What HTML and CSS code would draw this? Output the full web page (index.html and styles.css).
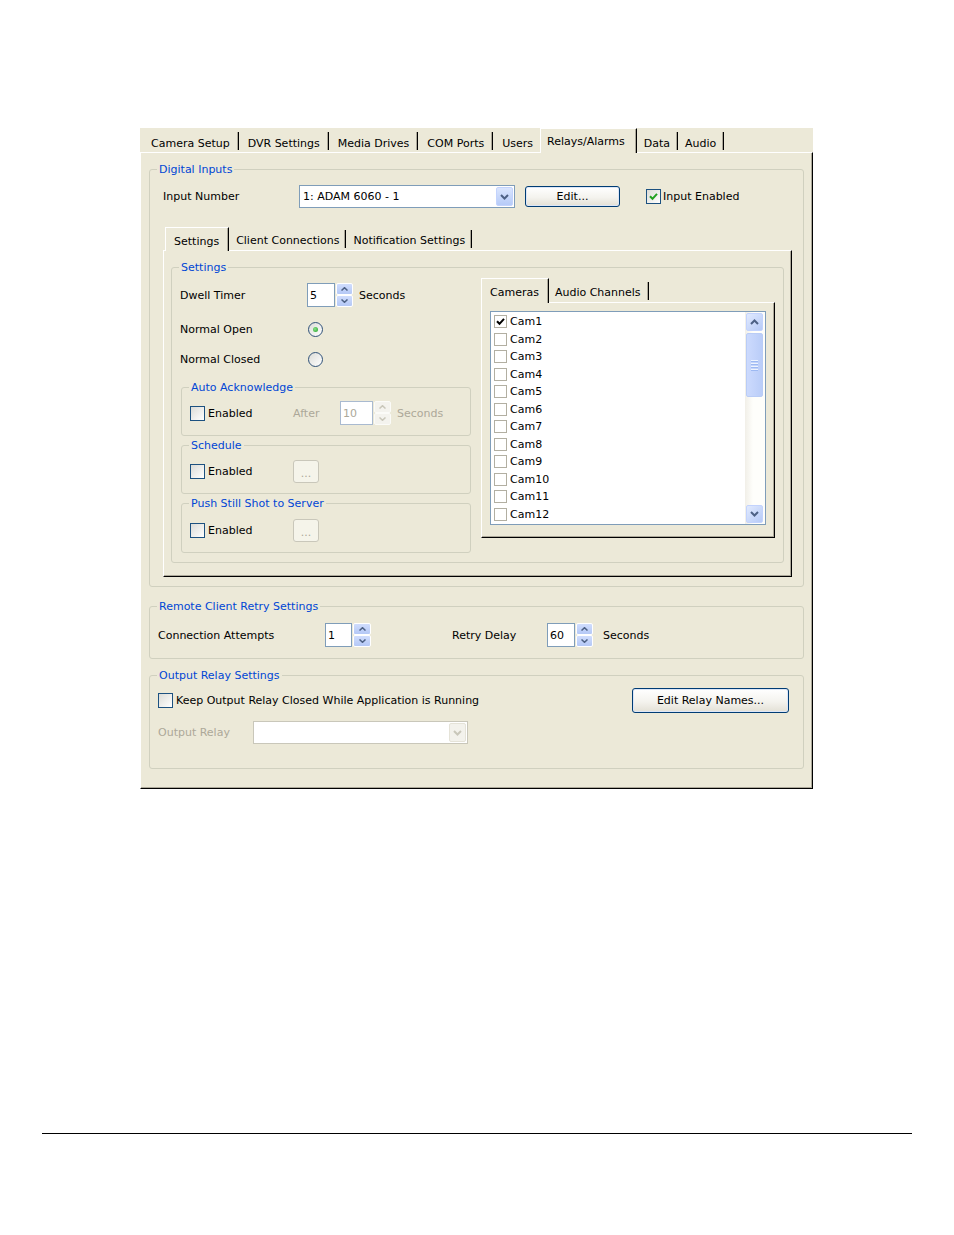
FILE: index.html
```html
<!DOCTYPE html>
<html>
<head>
<meta charset="utf-8">
<title>Relays/Alarms</title>
<link rel="stylesheet" href="styles.css">
</head>
<body>
<div class="page">
  <div class="window">
    <div class="tabs top">
      <div class="tab">Camera Setup</div>
      <div class="tab">DVR Settings</div>
      <div class="tab">Media Drives</div>
      <div class="tab">COM Ports</div>
      <div class="tab">Users</div>
      <div class="tab active">Relays/Alarms</div>
      <div class="tab after">Data</div>
      <div class="tab after">Audio</div>
    </div>
    <div class="panel">
      <fieldset class="group g-digital">
        <legend>Digital Inputs</legend>
        <div class="gbody">
          <div class="row r-input">
            <span class="w-input">Input Number</span>
            <div class="combo c-input">
              <span class="combo-text">1: ADAM 6060 - 1</span>
              <span class="combo-btn"><svg width="9" height="6" viewBox="0 0 9 6"><path d="M1 1 L4.5 4.5 L8 1" fill="none" stroke="#4D6185" stroke-width="2"/></svg></span>
            </div>
            <div class="btn b-edit">Edit...</div>
            <div class="check c-enabled"><span class="cbox"><svg width="9" height="9" viewBox="0 0 9 9"><path d="M1 4.2 L3.5 6.8 L8 1.8" fill="none" stroke="#21A121" stroke-width="2"/></svg></span>Input Enabled</div>
          </div>

          <div class="tabs subtabs">
            <div class="tab active">Settings</div>
            <div class="tab">Client Connections</div>
            <div class="tab">Notification Settings</div>
          </div>
          <div class="subpanel">
            <fieldset class="group g-settings">
              <legend>Settings</legend>
              <div class="gbody cols">
                <div class="leftcol">
                  <div class="row r-dwell">
                    <span class="w-dwell">Dwell Timer</span>
                    <div class="spin">
                      <div class="spin-in w28">5</div>
                      <div class="spin-bt">
                        <span><svg width="7" height="4" viewBox="0 0 7 4"><path d="M0.5 3.5 L3.5 0.7 L6.5 3.5" fill="none" stroke="#4D6185" stroke-width="1.5"/></svg></span>
                        <span><svg width="7" height="4" viewBox="0 0 7 4"><path d="M0.5 0.5 L3.5 3.3 L6.5 0.5" fill="none" stroke="#4D6185" stroke-width="1.5"/></svg></span>
                      </div>
                    </div>
                    <span class="secs-s">Seconds</span>
                  </div>
                  <div class="row r-radio r-open">
                    <span class="w-dwell">Normal Open</span>
                    <span class="radio on"><span class="dot"></span></span>
                  </div>
                  <div class="row r-radio r-closed">
                    <span class="w-dwell">Normal Closed</span>
                    <span class="radio"></span>
                  </div>

                  <fieldset class="group g-sub g-ack">
                    <legend>Auto Acknowledge</legend>
                    <div class="gbody">
                      <div class="row r-ack">
                        <div class="check w-en"><span class="cbox"></span>Enabled</div>
                        <span class="w-after dis">After</span>
                        <div class="spin dis">
                          <div class="spin-in w33">10</div>
                          <div class="spin-bt">
                            <span><svg width="7" height="4" viewBox="0 0 7 4"><path d="M0.5 3.5 L3.5 0.7 L6.5 3.5" fill="none" stroke="#C9C7BA" stroke-width="1.5"/></svg></span>
                            <span><svg width="7" height="4" viewBox="0 0 7 4"><path d="M0.5 0.5 L3.5 3.3 L6.5 0.5" fill="none" stroke="#C9C7BA" stroke-width="1.5"/></svg></span>
                          </div>
                        </div>
                        <span class="secs-s dis">Seconds</span>
                      </div>
                    </div>
                  </fieldset>

                  <fieldset class="group g-sub g-sched">
                    <legend>Schedule</legend>
                    <div class="gbody">
                      <div class="row r-btn">
                        <div class="check w-en2"><span class="cbox"></span>Enabled</div>
                        <div class="dbtn">...</div>
                      </div>
                    </div>
                  </fieldset>

                  <fieldset class="group g-sub g-push">
                    <legend>Push Still Shot to Server</legend>
                    <div class="gbody">
                      <div class="row r-btn r-push">
                        <div class="check w-en2"><span class="cbox"></span>Enabled</div>
                        <div class="dbtn">...</div>
                      </div>
                    </div>
                  </fieldset>
                </div>

                <div class="rightcol">
                  <div class="tabs camtabs">
                    <div class="tab active">Cameras</div>
                    <div class="tab">Audio Channels</div>
                  </div>
                  <div class="campanel">
                    <div class="listbox">
                      <div class="items">
                        <div class="item"><span class="lcb"><svg width="9" height="9" viewBox="0 0 9 9"><path d="M1 4.2 L3.5 6.8 L8 1.8" fill="none" stroke="#000" stroke-width="2"/></svg></span>Cam1</div>
                        <div class="item"><span class="lcb"></span>Cam2</div>
                        <div class="item"><span class="lcb"></span>Cam3</div>
                        <div class="item"><span class="lcb"></span>Cam4</div>
                        <div class="item"><span class="lcb"></span>Cam5</div>
                        <div class="item"><span class="lcb"></span>Cam6</div>
                        <div class="item"><span class="lcb"></span>Cam7</div>
                        <div class="item"><span class="lcb"></span>Cam8</div>
                        <div class="item"><span class="lcb"></span>Cam9</div>
                        <div class="item"><span class="lcb"></span>Cam10</div>
                        <div class="item"><span class="lcb"></span>Cam11</div>
                        <div class="item"><span class="lcb"></span>Cam12</div>
                      </div>
                      <div class="sbar">
                        <div class="sb-btn"><svg width="9" height="6" viewBox="0 0 9 6"><path d="M1 5 L4.5 1.5 L8 5" fill="none" stroke="#4D6185" stroke-width="2"/></svg></div>
                        <div class="thumb"><span class="grip"></span><span class="grip"></span><span class="grip"></span><span class="grip"></span></div>
                        <div class="sb-space"></div>
                        <div class="sb-btn"><svg width="9" height="6" viewBox="0 0 9 6"><path d="M1 1 L4.5 4.5 L8 1" fill="none" stroke="#4D6185" stroke-width="2"/></svg></div>
                      </div>
                    </div>
                  </div>
                </div>
              </div>
            </fieldset>
          </div>
        </div>
      </fieldset>

      <fieldset class="group g-remote">
        <legend>Remote Client Retry Settings</legend>
        <div class="gbody">
          <div class="row r-remote">
            <span class="w-conn">Connection Attempts</span>
            <div class="spin">
              <div class="spin-in w27">1</div>
              <div class="spin-bt w18">
                <span><svg width="7" height="4" viewBox="0 0 7 4"><path d="M0.5 3.5 L3.5 0.7 L6.5 3.5" fill="none" stroke="#4D6185" stroke-width="1.5"/></svg></span>
                <span><svg width="7" height="4" viewBox="0 0 7 4"><path d="M0.5 0.5 L3.5 3.3 L6.5 0.5" fill="none" stroke="#4D6185" stroke-width="1.5"/></svg></span>
              </div>
            </div>
            <span class="w-retry">Retry Delay</span>
            <div class="spin">
              <div class="spin-in w28">60</div>
              <div class="spin-bt">
                <span><svg width="7" height="4" viewBox="0 0 7 4"><path d="M0.5 3.5 L3.5 0.7 L6.5 3.5" fill="none" stroke="#4D6185" stroke-width="1.5"/></svg></span>
                <span><svg width="7" height="4" viewBox="0 0 7 4"><path d="M0.5 0.5 L3.5 3.3 L6.5 0.5" fill="none" stroke="#4D6185" stroke-width="1.5"/></svg></span>
              </div>
            </div>
            <span class="secs-l">Seconds</span>
          </div>
        </div>
      </fieldset>

      <fieldset class="group g-output">
        <legend>Output Relay Settings</legend>
        <div class="gbody">
          <div class="row r-keep">
            <div class="check"><span class="cbox"></span>Keep Output Relay Closed While Application is Running</div>
            <div class="btn b-names">Edit Relay Names...</div>
          </div>
          <div class="row r-relay">
            <span class="w-relay dis">Output Relay</span>
            <div class="combo dis c-relay">
              <span class="combo-text"></span>
              <span class="combo-btn"><svg width="9" height="6" viewBox="0 0 9 6"><path d="M1 1 L4.5 4.5 L8 1" fill="none" stroke="#C9C7BA" stroke-width="2"/></svg></span>
            </div>
          </div>
        </div>
      </fieldset>
    </div>
  </div>
  <div class="rule"></div>
</div>
</body>
</html>
```

FILE: styles.css
```css
* { box-sizing: border-box; }
html, body { margin: 0; padding: 0; background: #fff; }
body {
  font-family: "DejaVu Sans", "Liberation Sans", sans-serif;
  font-size: 11px;
  line-height: 13px;
  color: #000;
}
.page { padding-top: 128px; }
.window {
  margin-left: 140px;
  width: 673px;
  height: 661px;
  background: #ECE9D8;
  display: flex;
  flex-direction: column;
}

/* ---------- tabs ---------- */
.tabs { display: flex; align-items: flex-end; flex: none; }
.tab {
  height: 18px;
  margin-bottom: 2px;
  padding: 4px 8px 0;
  border-right: 1px solid #000;
  box-shadow: inset -1px 0 0 #ACA899;
  white-space: nowrap;
}
.tab.active {
  height: 25px;
  margin-bottom: -1px;
  border-top: 1px solid #fff;
  border-left: 1px solid #fff;
  background: #ECE9D8;
  position: relative;
  z-index: 1;
}
.top { height: 24px; padding-left: 2px; }
.top .tab { padding: 5px 8px 0 9px; }
.top .tab.after { padding: 5px 7px 0 7px; }
.top .tab.active { margin-left: -2px; padding: 6px 11px 0 6px; }

.subtabs { height: 23px; margin-top: 19px; }
.subtabs .tab { padding-left: 7px; padding-right: 6px; }
.subtabs .tab.active { height: 24px; margin-left: 2px; padding: 7px 9px 0 8px; }

.camtabs { height: 24px; margin-top: 4px; }
.camtabs .tab { padding-left: 6px; padding-right: 7px; }
.camtabs .tab.active { padding: 7px 9px 0 8px; }

/* ---------- panels ---------- */
.panel, .subpanel, .campanel {
  border-top: 1px solid #fff;
  border-left: 1px solid #fff;
  border-right: 1px solid #000;
  border-bottom: 1px solid #000;
  box-shadow: inset -1px -1px 0 #ACA899;
}
.panel { flex: 1; padding: 0 8px; }
.subpanel { height: 327px; padding: 0 7px; }
.campanel { height: 236px; padding: 8px 0 0 8px; }

/* ---------- group boxes ---------- */
.group {
  margin: 0;
  padding: 0;
  min-width: 0;
  border: 1px solid #D0D0BF;
  border-radius: 3px;
}
.group > legend {
  margin-left: 7px;
  padding: 0 2px;
  color: #0046D5;
  line-height: 13px;
}
.g-digital { margin-top: 10px; }
.g-digital > .gbody { padding: 9px 11px 9px 13px; }

.g-settings { margin-top: 10px; }
.cols { display: flex; gap: 10px; padding: 0 8px 9px 8px; }
.leftcol { width: 291px; }
.rightcol { width: 294px; }

.g-sub { margin-left: 1px; width: 290px; }
.g-ack { margin-top: 12px; }
.g-ack > .gbody { padding: 7px 8px 10px; }
.g-sched { margin-top: 3px; }
.g-sched > .gbody { padding: 8px 8px 10px; }
.g-push { margin-top: 3px; }
.g-push > .gbody { padding: 9px 8px 10px; }

.g-remote { margin-top: 13px; }
.g-remote > .gbody { padding: 10px 8px 11px; }
.g-output { margin-top: 10px; }
.g-output > .gbody { padding: 6px 14px 24px 8px; }

/* ---------- rows ---------- */
.row { display: flex; align-items: center; }
.r-input { height: 23px; }
.w-input { width: 136px; }
.r-dwell { height: 24px; margin-top: 9px; }
.w-dwell { width: 127px; }
.r-radio { height: 20px; }
.r-open { margin-top: 12px; }
.r-closed { margin-top: 10px; }
.r-ack { height: 24px; }
.r-btn { height: 23px; }
.w-en { width: 103px; }
.w-en2 { width: 103px; }
.w-after { width: 47px; }
.secs-s { margin-left: 6px; }
.r-remote { height: 24px; }
.w-conn { width: 167px; }
.w-retry { margin-left: 81px; width: 95px; }
.secs-l { margin-left: 10px; }
.r-keep { height: 25px; justify-content: space-between; }
.r-relay { height: 23px; margin-top: 8px; }
.w-relay { width: 95px; }
.dis { color: #ACA899; }

/* ---------- controls ---------- */
.check { display: flex; align-items: center; gap: 3px; white-space: nowrap; }
.c-enabled { margin-left: 26px; gap: 2px; }
.cbox {
  width: 15px;
  height: 15px;
  flex: none;
  border: 1px solid #1C5180;
  background: linear-gradient(135deg, #DCDCD7, #FFFFFF);
  display: flex;
  align-items: center;
  justify-content: center;
}
.radio {
  width: 15px;
  height: 15px;
  margin-left: 1px;
  flex: none;
  border-radius: 50%;
  border: 1px solid #2F5178;
  background: linear-gradient(135deg, #DCDCD7, #FFFFFF);
  display: flex;
  align-items: center;
  justify-content: center;
}
.dot {
  width: 5px;
  height: 5px;
  border-radius: 50%;
  background: radial-gradient(circle at 40% 40%, #8BE08B, #21A121);
}

.btn {
  display: flex;
  align-items: center;
  justify-content: center;
  border: 1px solid #003C74;
  border-radius: 3px;
  background: linear-gradient(#FFFFFF, #F4F3EE 55%, #E3E0D5);
  box-shadow: inset 0 0 0 1px #DCE6F7;
  white-space: nowrap;
}
.b-edit { margin-left: 10px; width: 95px; height: 21px; }
.b-names { width: 157px; height: 25px; }
.dbtn {
  width: 26px;
  height: 23px;
  border: 1px solid #C9C7BA;
  border-radius: 3px;
  background: #F5F4EA;
  color: #ACA899;
  display: flex;
  align-items: center;
  justify-content: center;
  padding-top: 3px;
}

.combo {
  display: flex;
  align-items: stretch;
  border: 1px solid #7F9DB9;
  background: #fff;
  padding: 1px;
}
.c-input { width: 216px; height: 23px; }
.c-relay { width: 215px; height: 23px; }
.combo-text { flex: 1; padding-left: 2px; display: flex; align-items: center; }
.combo-btn {
  width: 17px;
  border-radius: 2px;
  border: 1px solid #C3D3FD;
  background: linear-gradient(#DAE5FE, #B6CBF8);
  display: flex;
  align-items: center;
  justify-content: center;
}
.combo.dis { border-color: #C9C7BA; }
.combo.dis .combo-btn { border-color: #E5E3D8; background: #F3F2EC; }

.spin { display: flex; height: 24px; }
.spin-in {
  border: 1px solid #7F9DB9;
  background: #fff;
  display: flex;
  align-items: center;
  padding-left: 2px;
}
.w27 { width: 27px; }
.w28 { width: 28px; }
.w33 { width: 33px; }
.spin-bt { display: flex; flex-direction: column; width: 17px; margin-left: 1px; }
.spin-bt.w18 { width: 18px; }
.spin-bt span {
  flex: 1;
  display: flex;
  align-items: center;
  justify-content: center;
  border: 1px solid #fff;
  border-radius: 2px;
  background: linear-gradient(#D0DDFD, #B4C8F6);
}
.spin.dis .spin-in { color: #ACA899; border-color: #A9BAD0; }
.spin.dis .spin-bt span { background: #F4F3EE; border-color: #FBFBF8; }

/* ---------- list ---------- */
.listbox {
  width: 276px;
  height: 214px;
  border: 1px solid #7F9DB9;
  background: #fff;
  display: flex;
}
.items { flex: 1; padding-left: 3px; padding-top: 1px; }
.item { height: 17.5px; display: flex; align-items: center; gap: 3px; }
.lcb {
  width: 13px;
  height: 13px;
  flex: none;
  border: 1px solid #B2AFA2;
  background: #fff;
  display: flex;
  align-items: center;
  justify-content: center;
}
.sbar {
  width: 20px;
  display: flex;
  flex-direction: column;
  padding: 1px 2px 1px 1px;
  background: linear-gradient(90deg, #F1EFE8, #FEFEFB 40%);
}
.sb-btn {
  height: 18px;
  flex: none;
  border: 1px solid #C3D3FD;
  border-radius: 2px;
  background: linear-gradient(135deg, #E1EAFE, #B6CAF7);
  display: flex;
  align-items: center;
  justify-content: center;
}
.thumb {
  height: 64px;
  margin-top: 2px;
  flex: none;
  border: 1px solid #B9CCF6;
  border-radius: 2px;
  background: linear-gradient(90deg, #CCDAFD, #BACDF8);
  display: flex;
  flex-direction: column;
  align-items: center;
  justify-content: center;
  gap: 1px;
}
.grip { width: 7px; height: 1px; background: #EEF4FE; box-shadow: 0 1px 0 #9DB9F2; margin-bottom: 1px; }
.sb-space { flex: 1; }

.rule { margin: 344px 0 0 42px; width: 870px; height: 1px; background: #000; }
```
